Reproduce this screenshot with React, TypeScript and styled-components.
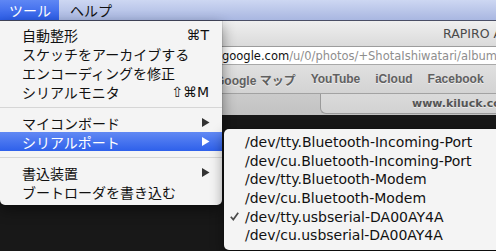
import React from 'react';
import styled, { createGlobalStyle } from 'styled-components';

const GlobalStyle = createGlobalStyle`
  html, body {
    margin: 0;
    padding: 0;
    background: #181818;
  }
`;

const JP = '"Noto Sans CJK JP", "DejaVu Sans", sans-serif';
const UI = '"DejaVu Sans", "Noto Sans CJK JP", sans-serif';
const BAR = '"Liberation Sans", "Noto Sans CJK JP", sans-serif';

const Screen = styled.div`
  position: relative;
  width: 496px;
  height: 251px;
  overflow: hidden;
  background: #181818;
  display: flex;
  flex-direction: column;
`;

const MenuBar = styled.div`
  height: 20px;
  border-bottom: 1px solid #4a4f66;
  background: linear-gradient(#cdd7f2, #a9b7e1);
  display: flex;
  align-items: stretch;
  padding-left: 1px;
  flex-shrink: 0;
`;

const MenuTitle = styled.div<{ $active?: boolean }>`
  display: flex;
  align-items: center;
  padding: 0 8px 0 9px;
  font-family: ${JP};
  font-size: 14px;
  color: ${(p) => (p.$active ? '#fff' : '#111')};
  background: ${(p) => (p.$active ? 'linear-gradient(#5f87f4, #2c5de8)' : 'transparent')};
  margin-left: ${(p) => (p.$active ? '-1px' : '2px')};
`;

const TitleBar = styled.div`
  height: 25px;
  border-bottom: 1px solid #9c9c9c;
  background: linear-gradient(#efefef, #dadada);
  display: flex;
  align-items: center;
  padding-left: 443px;
  font-family: ${UI};
  font-size: 12.5px;
  color: #4a4a4a;
  white-space: nowrap;
  overflow: hidden;
  flex-shrink: 0;
`;

const AddressRow = styled.div`
  height: 17px;
  border-bottom: 1px solid #a9a9a9;
  background: #fff;
  display: flex;
  align-items: center;
  padding-left: 222px;
  font-family: ${UI};
  font-size: 11.5px;
  white-space: nowrap;
  overflow: hidden;
  flex-shrink: 0;
`;

const Host = styled.span`
  color: #111;
`;

const Path = styled.span`
  color: #8e8e8e;
`;

const BookmarkBar = styled.div`
  height: 28px;
  border-bottom: 1px solid #a2a2a2;
  background: linear-gradient(#e0e0e0, #d3d3d3);
  display: flex;
  align-items: center;
  gap: 15px;
  padding-left: 215px;
  white-space: nowrap;
  overflow: hidden;
  flex-shrink: 0;
`;

const Bookmark = styled.span`
  font-family: ${BAR};
  font-size: 12px;
  font-weight: bold;
  color: #606060;
  text-shadow: 0 1px 0 rgba(255, 255, 255, 0.6);
`;

const TabStrip = styled.div`
  height: 21px;
  background: linear-gradient(#cbcbcb, #c2c2c2);
  display: flex;
  padding-left: 320px;
  flex-shrink: 0;
`;

const Tab = styled.div`
  flex: 1;
  background: linear-gradient(#dadada, #d2d2d2);
  border-left: 1px solid #9a9a9a;
  border-bottom: 1px solid #9a9a9a;
  border-bottom-left-radius: 6px;
  margin-bottom: 1px;
  display: flex;
  align-items: center;
  padding-left: 91px;
  font-family: ${UI};
  font-size: 11px;
  font-weight: bold;
  color: #555;
  white-space: nowrap;
  overflow: hidden;
  text-shadow: 0 1px 0 rgba(255, 255, 255, 0.5);
`;

const Content = styled.div`
  flex: 1;
  background: #181818;
`;

const Menu = styled.div`
  position: absolute;
  top: 21px;
  left: 0;
  width: 222px;
  padding: 4px 0;
  background: #f4f4f4;
  border-radius: 0 0 5px 5px;
  box-shadow: 0 5px 14px rgba(0, 0, 0, 0.45), 0 0 0 1px rgba(0, 0, 0, 0.08);
  z-index: 2;
`;

const SubMenu = styled.div`
  position: absolute;
  top: 129px;
  left: 224px;
  width: 290px;
  padding: 4px 0 5px;
  background: #f4f4f4;
  border-radius: 5px;
  box-shadow: 0 5px 14px rgba(0, 0, 0, 0.45), 0 0 0 1px rgba(0, 0, 0, 0.08);
  z-index: 3;
`;

const Item = styled.div<{ $highlighted?: boolean }>`
  height: 19px;
  display: flex;
  align-items: center;
  justify-content: space-between;
  padding: 0 12px 0 22px;
  font-family: ${JP};
  font-size: 14px;
  color: ${(p) => (p.$highlighted ? '#fff' : '#111')};
  background: ${(p) => (p.$highlighted ? 'linear-gradient(#6189f4, #2e60ea)' : 'transparent')};
`;

const Shortcut = styled.span`
  font-family: ${UI};
  font-size: 14px;
  margin-right: 1px;
`;

const Separator = styled.div`
  height: 1px;
  margin: 6px 0 5px;
  background: #d6d6d6;
`;

const PortItem = styled.div`
  height: 18.6px;
  display: flex;
  align-items: center;
  padding-left: 6px;
  font-family: ${UI};
  font-size: 14px;
  color: #111;
  white-space: nowrap;
`;

const CheckSlot = styled.span`
  width: 15px;
  display: flex;
  align-items: center;
`;

const Arrow = ({ color }: { color: string }) => (
  <svg width="8" height="9" viewBox="0 0 8 9">
    <path d="M0 0 L7.5 4.5 L0 9 Z" fill={color} />
  </svg>
);

const Check = () => (
  <svg width="9" height="9" viewBox="0 0 9 9">
    <path d="M0.8 4.8 L3.3 7.6 L8.2 0.8" fill="none" stroke="#4a4a4a" strokeWidth="1.7" />
  </svg>
);

const ports = [
  '/dev/tty.Bluetooth-Incoming-Port',
  '/dev/cu.Bluetooth-Incoming-Port',
  '/dev/tty.Bluetooth-Modem',
  '/dev/cu.Bluetooth-Modem',
  '/dev/tty.usbserial-DA00AY4A',
  '/dev/cu.usbserial-DA00AY4A',
];

export default function App() {
  return (
    <Screen>
      <GlobalStyle />
      <MenuBar>
        <MenuTitle $active>ツール</MenuTitle>
        <MenuTitle>ヘルプ</MenuTitle>
      </MenuBar>
      <TitleBar>RAPIRO Arduino</TitleBar>
      <AddressRow>
        <Host>google.com</Host>
        <Path>/u/0/photos/+ShotaIshiwatari/albums</Path>
      </AddressRow>
      <BookmarkBar>
        <Bookmark>Google マップ</Bookmark>
        <Bookmark>YouTube</Bookmark>
        <Bookmark>iCloud</Bookmark>
        <Bookmark>Facebook</Bookmark>
      </BookmarkBar>
      <TabStrip>
        <Tab>www.kiluck.co.jp</Tab>
      </TabStrip>
      <Content />

      <Menu>
        <Item>
          自動整形<Shortcut>⌘T</Shortcut>
        </Item>
        <Item>スケッチをアーカイブする</Item>
        <Item>エンコーディングを修正</Item>
        <Item>
          シリアルモニタ<Shortcut>⇧⌘M</Shortcut>
        </Item>
        <Separator />
        <Item>
          マイコンボード<Arrow color="#333" />
        </Item>
        <Item $highlighted>
          シリアルポート<Arrow color="#fff" />
        </Item>
        <Separator />
        <Item>
          書込装置<Arrow color="#333" />
        </Item>
        <Item>ブートローダを書き込む</Item>
      </Menu>

      <SubMenu>
        {ports.map((p, i) => (
          <PortItem key={p}>
            <CheckSlot>{i === 4 ? <Check /> : null}</CheckSlot>
            {p}
          </PortItem>
        ))}
      </SubMenu>
    </Screen>
  );
}
